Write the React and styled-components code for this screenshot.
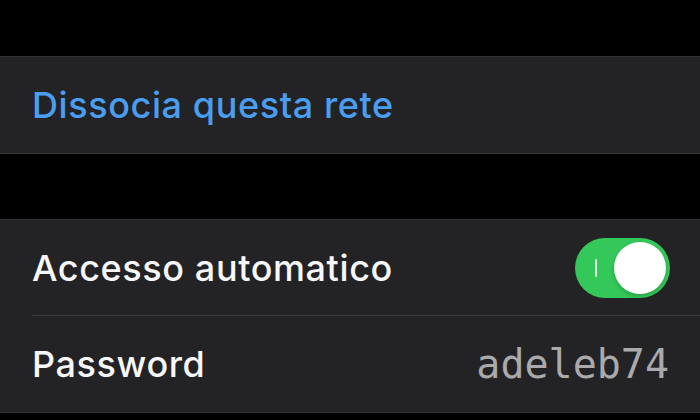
import React from "react";
import styled, { createGlobalStyle } from "styled-components";

const Global = createGlobalStyle`
  html, body { margin: 0; padding: 0; background: #000; }
  body { font-family: Inter, "Liberation Sans", sans-serif; -webkit-font-smoothing: antialiased; }
`;

const Page = styled.div`
  width: 700px;
  height: 420px;
  background: #000;
  display: flex;
  flex-direction: column;
  gap: 65px;
  padding-top: 56px;
  box-sizing: border-box;
  overflow: hidden;
`;

const Group = styled.div`
  background: #232325;
  border-top: 1px solid #333335;
  border-bottom: 1px solid #333335;
  display: flex;
  flex-direction: column;
`;

const Row = styled.div`
  padding-left: 32px;
  display: flex;
`;

const RowInner = styled.div`
  flex: 1;
  height: ${(p) => (p.$last ? 96 : 95)}px;
  display: flex;
  align-items: center;
  justify-content: space-between;
  padding-right: ${(p) => p.$pr ?? 30}px;
  border-bottom: ${(p) => (p.$last ? "none" : "1px solid #39393b")};
`;

const Label = styled.span`
  font-size: 36px;
  font-weight: 500;
  color: ${(p) => p.$color || "#f7f7f9"};
  letter-spacing: 0.6px;
`;

const Mono = styled.span`
  font-family: "DejaVu Sans Mono", "Liberation Mono", monospace;
  font-size: 40px;
  color: #aaaaac;
  letter-spacing: 0;
`;

const Toggle = styled.div`
  width: 95px;
  height: 60px;
  border-radius: 30px;
  background: #34c759;
  position: relative;
  display: flex;
  align-items: center;
  justify-content: flex-end;
  padding: 0 4px;
  box-sizing: border-box;
`;

const OnMark = styled.span`
  position: absolute;
  left: 20px;
  top: 21px;
  width: 2px;
  height: 18px;
  background: rgba(255, 255, 255, 0.85);
  border-radius: 1px;
`;

const Knob = styled.span`
  width: 52px;
  height: 52px;
  border-radius: 50%;
  background: #fff;
  box-shadow: 0 2px 4px rgba(0, 0, 0, 0.2);
`;

export default function App() {
  return (
    <>
      <Global />
      <Page>
        <Group>
          <Row>
            <RowInner $last>
              <Label $color="#4a9ef0">Dissocia questa rete</Label>
            </RowInner>
          </Row>
        </Group>
        <Group>
          <Row>
            <RowInner>
              <Label>Accesso automatico</Label>
              <Toggle>
                <OnMark />
                <Knob />
              </Toggle>
            </RowInner>
          </Row>
          <Row>
            <RowInner $last $pr={31}>
              <Label>Password</Label>
              <Mono>adeleb74</Mono>
            </RowInner>
          </Row>
        </Group>
      </Page>
    </>
  );
}
